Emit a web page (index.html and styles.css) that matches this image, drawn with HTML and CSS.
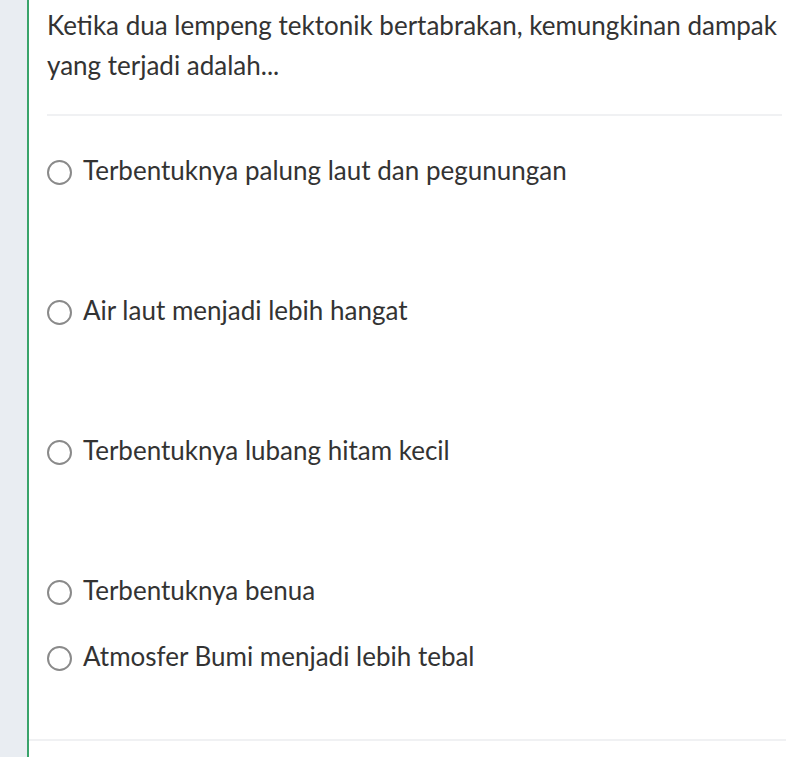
FILE: index.html
```html
<!DOCTYPE html>
<html lang="id">
<head>
<meta charset="utf-8">
<link rel="stylesheet" href="styles.css">
</head>
<body>
<div class="page">
  <div class="rail"></div>
  <div class="main">
    <div class="card">
      <p class="question">Ketika dua lempeng tektonik bertabrakan, kemungkinan dampak yang terjadi adalah...</p>
      <div class="divider"></div>
      <ul class="options">
        <li class="option tall"><span class="radio"></span><span class="label">Terbentuknya palung laut dan pegunungan</span></li>
        <li class="option tall"><span class="radio"></span><span class="label">Air laut menjadi lebih hangat</span></li>
        <li class="option tall"><span class="radio"></span><span class="label">Terbentuknya lubang hitam kecil</span></li>
        <li class="option"><span class="radio"></span><span class="label">Terbentuknya benua</span></li>
        <li class="option"><span class="radio"></span><span class="label">Atmosfer Bumi menjadi lebih tebal</span></li>
      </ul>
    </div>
    <div class="bottom-line"></div>
  </div>
</div>
</body>
</html>
```

FILE: styles.css
```css
html, body {
  margin: 0;
  padding: 0;
  background: #ffffff;
}
body {
  font-family: "Lato", "Liberation Sans", sans-serif;
  color: #333333;
}
.page {
  display: flex;
  min-height: 757px;
}
.rail {
  width: 27px;
  flex: none;
  background: #e9edf2;
}
.main {
  flex: 1;
  border-left: 2px solid #3aa36b;
  display: flex;
  flex-direction: column;
}
.card {
  padding: 5px 4px 0 18px;
}
.question {
  margin: 0;
  font-size: 26px;
  line-height: 40px;
}
.divider {
  height: 2px;
  background: #f0f1f3;
  margin-top: 29px;
}
.options {
  list-style: none;
  margin: 34px 0 0 0;
  padding: 0;
}
.option {
  display: flex;
  align-items: center;
  height: 40px;
  margin-bottom: 26px;
  font-size: 26px;
}
.option.tall {
  margin-bottom: 100px;
}
.radio {
  width: 21px;
  height: 21px;
  border: 2.5px solid #8a8a8a;
  border-radius: 50%;
  flex: none;
  margin-right: 11px;
  margin-top: 5px;
}
.bottom-line {
  height: 2px;
  background: #f0f1f3;
  margin-top: 37px;
}
```
